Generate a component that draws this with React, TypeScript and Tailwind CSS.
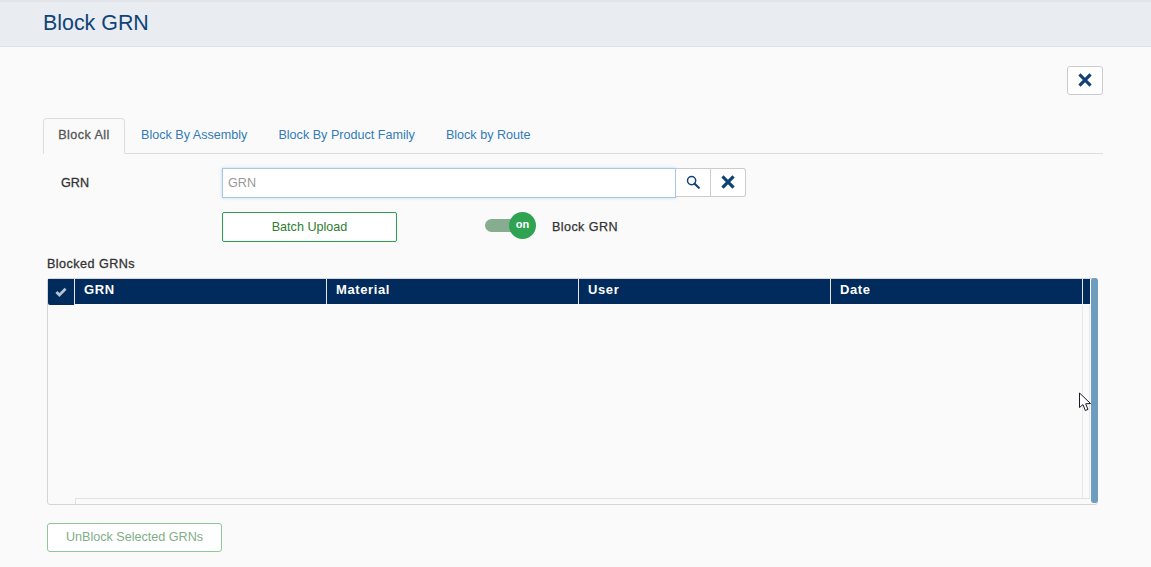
import React from "react";

function XIcon({ size = 14 }: { size?: number }) {
  return (
    <svg width={size} height={size} viewBox="0 0 14 14" fill="none">
      <path d="M2.6 2.6 L11.4 11.4 M11.4 2.6 L2.6 11.4" stroke="#0f4276" strokeWidth="3.2" strokeLinecap="square" />
    </svg>
  );
}

function SearchIcon() {
  return (
    <svg width="14" height="14" viewBox="0 0 14 14" fill="none">
      <circle cx="5.6" cy="5.6" r="4.1" stroke="#0f4276" strokeWidth="1.5" />
      <path d="M8.7 8.7 L12.8 12.8" stroke="#0f4276" strokeWidth="2.1" strokeLinecap="round" />
    </svg>
  );
}

function CheckIcon() {
  return (
    <svg width="12" height="10" viewBox="0 0 12 10" fill="none">
      <path d="M1.4 5 L4.4 8 L10.6 1.8" stroke="#b4c1cf" strokeWidth="2.8" />
    </svg>
  );
}

function Cursor() {
  return (
    <svg className="absolute left-[1079px] top-[392px]" width="13" height="21" viewBox="0 0 13 21" fill="none">
      <path d="M0.5 1 L0.5 15.5 L4 12.6 L6.3 18.5 L9 17.4 L6.7 11.8 L11.5 11.5 Z" fill="#ffffff" stroke="#1a1a2a" strokeWidth="1" strokeLinejoin="round" />
    </svg>
  );
}

const cols = ["GRN", "Material", "User", "Date"];
const tabs = ["Block By Assembly", "Block By Product Family", "Block by Route"];

export default function App() {
  return (
    <div className="relative h-[567px] w-full overflow-hidden bg-[#fafafa] font-['Liberation_Sans',Arial,sans-serif] text-[12.6px] text-[#333333] flex flex-col">
      <header className="h-[47px] shrink-0 bg-[#e9ecf1] border-t-2 border-b border-t-[#e2e4e9] border-b-[#dfe2e8] pl-[43px] flex items-start">
        <h1 className="text-[21.4px] leading-[40px] mt-[1px] font-normal text-[#0f4476]">Block GRN</h1>
      </header>

      <main className="flex-1 pl-[43px] pr-[48px] flex flex-col">
        <div className="flex justify-end mt-[19px]">
          <button className="w-[36px] h-[29px] pb-[2px] bg-white border border-[#cccccc] rounded-[3px] flex items-center justify-center">
            <XIcon />
          </button>
        </div>

        <nav className="mt-[23px] h-[36px] flex border-b border-[#dddddd]">
          <div className="h-[36px] w-[82px] pb-[2px] border border-[#dddddd] border-b-[#fafafa] rounded-t-[4px] flex items-center justify-center tracking-[0.45px] [-webkit-text-stroke:0.3px] text-[#555555] bg-[#fafafa]">
            Block All
          </div>
          <div className="flex items-center pl-[16px] gap-[31px] h-[35px] text-[#337ab7]">
            {tabs.map((t) => (
              <span key={t}>{t}</span>
            ))}
          </div>
        </nav>

        <div className="mt-[14px] flex items-start h-[30px]">
          <label className="w-[179px] pl-[18px] leading-[30px] [-webkit-text-stroke:0.3px] text-[#333333]">GRN</label>
          <div className="w-[454px] h-[30px] bg-white border border-[#a9c6e3] shadow-[0_0_3px_rgba(102,175,233,0.45)] pl-[5px] leading-[28px] text-[#999999]">
            GRN
          </div>
          <div className="flex h-[29px] bg-white border border-l-0 border-[#cccccc] rounded-r-[3px]">
            <button className="w-[34px] pb-[2px] flex items-center justify-center">
              <SearchIcon />
            </button>
            <button className="w-[35px] pb-[2px] flex items-center justify-center border-l border-[#cccccc]">
              <XIcon />
            </button>
          </div>
        </div>

        <div className="mt-[14px] flex items-center h-[30px] pl-[179px]">
          <button className="w-[175px] h-[30px] bg-white border border-[#2e9e4f] rounded-[2px] text-[#2e7d32]">
            Batch Upload
          </button>
          <div className="relative ml-[88px] mb-[3px] w-[52px] h-[27px] flex items-center">
            <div className="w-[38px] h-[13px] rounded-full bg-[#86ad8f]" />
            <div className="absolute left-[24px] top-0 w-[27px] h-[27px] rounded-full bg-[#2fa352] flex items-center justify-center text-white font-bold text-[11px] pb-[3px]">
              on
            </div>
          </div>
          <span className="ml-[15px] tracking-[0.4px] [-webkit-text-stroke:0.25px] text-[#333333]">Block GRN</span>
        </div>

        <div className="mt-[15px] ml-[4px] h-[14px] leading-[14px] tracking-[0.45px] [-webkit-text-stroke:0.3px] text-[#333333]">Blocked GRNs</div>

        <section className="relative mt-[7px] ml-[4px] mr-[5px] h-[227px] border border-[#d5d5d5] rounded-[3px] flex flex-col">
          <div className="flex h-[26px] shrink-0 mr-[7px]">
            <div className="w-[27px] h-[26px] bg-[#002b5c] rounded-bl-[2px] flex items-center justify-center border-r border-[#e5e5e5]">
              <CheckIcon />
            </div>
            <div className="flex-1 h-[25px] bg-[#002b5c] flex">
              {cols.map((c) => (
                <div key={c} className="w-[252px] border-r border-[#e5e5e5] pl-[9px] leading-[21px] font-bold text-[13px] tracking-[0.6px] text-white">
                  {c}
                </div>
              ))}
            </div>
          </div>
          <div className="flex-1 flex mr-[7px]">
            <div className="flex-1" />
            <div className="w-[8px] border-l border-r border-[#e8e8e8]" />
          </div>
          <div className="h-[6px] ml-[27px] mr-[7px] border-t border-l border-[#e2e2e2]" />
          <div className="absolute right-[-1px] top-[-1px] w-[7px] h-[225px] rounded-[3px] bg-[#6d9cbf]" />
        </section>

        <div className="mt-[18px] ml-[4px]">
          <button className="w-[175px] h-[29px] bg-white border border-[#8fc79a] rounded-[3px] text-[#7fae88]">
            UnBlock Selected GRNs
          </button>
        </div>
      </main>

      <Cursor />
    </div>
  );
}
